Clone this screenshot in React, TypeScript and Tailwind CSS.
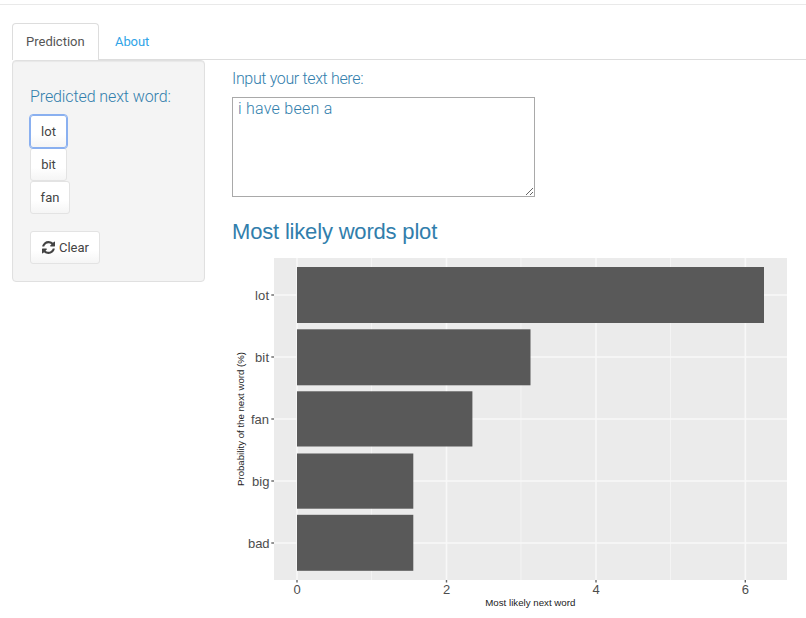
import React from "react";

const words = [
  { word: "lot", y: 267, h: 56, w: 467 },
  { word: "bit", y: 329.3, h: 56, w: 233.5 },
  { word: "fan", y: 391.3, h: 55.2, w: 175.4 },
  { word: "big", y: 453.5, h: 55.2, w: 116.3 },
  { word: "bad", y: 514.8, h: 56, w: 116.3 },
];

const rows = [295, 357, 419, 481, 543];
const labelX = [255, 255, 251, 252, 248];
const labelW = [14, 14, 18, 17.5, 21.5];
const ticks = [
  { x: 297, label: "0" },
  { x: 446.5, label: "2" },
  { x: 596, label: "4" },
  { x: 745.3, label: "6" },
];

function Plot() {
  return (
    <svg
      className="block h-[360px] w-[574px] font-['Liberation_Sans',Arial,sans-serif]"
      viewBox="232 258 574 360"
    >
      <rect x="274" y="258" width="513" height="322" fill="#ebebeb" />
      {[371.5, 521, 670.5].map((x) => (
        <line key={x} x1={x} x2={x} y1="258" y2="580" stroke="#f4f4f4" strokeWidth="1" />
      ))}
      {rows.map((y) => (
        <line key={y} x1="274" x2="787" y1={y} y2={y} stroke="#f8f8f8" strokeWidth="1.6" />
      ))}
      {ticks.map((t) => (
        <line key={t.x} x1={t.x} x2={t.x} y1="258" y2="580" stroke="#f8f8f8" strokeWidth="1.6" />
      ))}
      {words.map((b) => (
        <rect key={b.word} x="297" y={b.y} width={b.w} height={b.h} fill="#595959" />
      ))}
      {words.map((b, i) => (
        <g key={b.word}>
          <line x1="271.3" x2="274" y1={rows[i]} y2={rows[i]} stroke="#666" strokeWidth="1.4" />
          <text x={labelX[i]} y={rows[i] + 4.5} fontSize="13" textLength={labelW[i]} fill="#4d4d4d">
            {b.word}
          </text>
        </g>
      ))}
      {ticks.map((t) => (
        <g key={t.label}>
          <line x1={t.x} x2={t.x} y1="580" y2="582.5" stroke="#666" strokeWidth="1.4" />
          <text x={t.x} y="594" fontSize="13" textAnchor="middle" fill="#4d4d4d">
            {t.label}
          </text>
        </g>
      ))}
      <text x="485.3" y="606" fontSize="9.8" textLength="90" lengthAdjust="spacingAndGlyphs" fill="#222">
        Most likely next word
      </text>
      <text transform="translate(244 486) rotate(-90)" fontSize="9.8" textLength="134" lengthAdjust="spacingAndGlyphs" fill="#222">
        Probability of the next word (%)
      </text>
    </svg>
  );
}

const button =
  "block h-[33px] rounded-[3px] border border-[#e3e3e3] bg-gradient-to-b from-white from-60% to-[#f5f5f5] text-[13px] leading-[31px] text-[#444]";

export default function App() {
  return (
    <div className="h-[618px] w-[806px] overflow-hidden bg-white pt-1 font-[Roboto,'Liberation_Sans',sans-serif] text-[13px]">
      <div className="h-px bg-[#e9e9e9]" />
      <nav className="mt-[18px] ml-3 flex h-[37px] border-b border-[#ddd]">
        <a className="h-[37px] w-[87px] rounded-t-[4px] border border-b-0 border-[#ddd] bg-white pl-[13px] leading-[36px] text-[#555]">
          Prediction
        </a>
        <a className="pl-4 leading-[37px] tracking-[-0.1px] text-[#2fa4e7]">About</a>
      </nav>
      <div className="flex pl-3">
        <aside className="h-[222px] w-[193px] shrink-0 rounded-[4px] border border-[#e0e0e0] bg-[#f4f4f4] pl-[17px] pt-[26px] shadow-[inset_0_1px_1px_rgba(0,0,0,0.05)]">
          <h4 className="h-[28px] text-[16px] font-light leading-[20px] tracking-[-0.1px] text-[#317eac]">Predicted next word:</h4>
          <button className={button + " w-[37px] outline-1 outline-[#8ab0f0] !border-[#8ab0f0]"}>lot</button>
          <button className={button + " w-[37px]"}>bit</button>
          <button className={button + " w-[40px]"}>fan</button>
          <button className={button + " mt-[17px] flex w-[70px] items-center pl-[11px]"}>
            <svg className="mr-1 size-[13px]" viewBox="0 0 1536 1536" fill="#444">
              <path d="M1511 928q0 5-1 7-64 268-268 434.500T764 1536q-146 0-282.500-55T238 1324l-129 129q-19 19-45 19t-45-19-19-45V960q0-26 19-45t45-19h448q26 0 45 19t19 45-19 45l-137 137q71 66 161 102t187 36q134 0 250-65t186-179q11-17 53-117 8-23 30-23h192q13 0 22.500 9.500t9.500 22.500zm25-800v448q0 26-19 45t-45 19h-448q-26 0-45-19t-19-45 19-45l138-138Q969 256 768 256q-134 0-250 65T332 500q-11 17-53 117-8 23-30 23H50q-13 0-22.500-9.500T18 608v-7q65-268 270-434.500T768 0q146 0 284 55.500T1297 212l130-129q19-19 45-19t45 19 19 45z" />
            </svg>
            Clear
          </button>
        </aside>
        <main className="ml-[27px]">
          <h4 className="h-[37px] pt-[9px] text-[16px] font-light leading-[20px] tracking-[-0.35px] text-[#317eac]">Input your text here:</h4>
          <textarea
            className="block h-[100px] w-[303px] resize border border-[#a9a9a9] bg-white px-[5px] pt-[1px] font-[Roboto,'Liberation_Sans',sans-serif] text-[16px] font-light leading-[19px] tracking-[0.25px] text-[#317eac]"
            defaultValue="i have been a"
          />
          <h3 className="h-[61px] pt-[21px] font-['Liberation_Sans',Arial,sans-serif] text-[22px] leading-[28px] tracking-[-0.18px] text-[#317eac]">
            Most likely words plot
          </h3>
          <Plot />
        </main>
      </div>
    </div>
  );
}
